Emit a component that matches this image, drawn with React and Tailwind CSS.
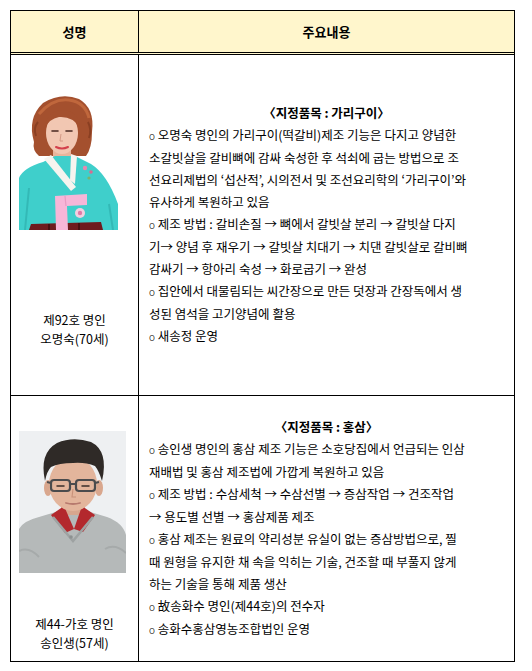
const font = { fontFamily: '"Noto Sans CJK KR", "Noto Sans", sans-serif' };

function WomanPhoto() {
  return (
    <svg width="99" height="138" viewBox="0 0 99 138">
      <rect width="99" height="138" fill="#ffffff" />
      {/* hair */}
      <path d="M15,50 Q8,26 24,11 Q42,0 60,7 Q76,16 73,40 Q73,56 67,64 L20,64 Q13,58 15,50 Z" fill="#a4502e" />
      <path d="M20,22 Q34,6 50,8 Q66,10 70,26" stroke="#c0673c" strokeWidth="3" fill="none" />
      <path d="M17,44 Q14,36 19,30 M69,30 Q73,38 70,46" stroke="#8a3f22" strokeWidth="2" fill="none" />
      {/* neck */}
      <rect x="34" y="54" width="18" height="16" fill="#e9b59c" />
      {/* face */}
      <ellipse cx="43" cy="41" rx="16" ry="21" fill="#f2c7b2" />
      <path d="M26,36 Q28,18 44,18 Q60,19 61,36 Q54,24 40,25 Q30,27 26,36 Z" fill="#a4502e" />
      <path d="M33,39 L39,39 M47,39 L53,39" stroke="#4a2a22" strokeWidth="1.6" strokeLinecap="round" />
      <path d="M42,42 L41,49 L44,49" stroke="#d49a86" strokeWidth="1" fill="none" />
      <path d="M37,55 Q43,58 49,55" stroke="#d3404c" strokeWidth="2" fill="none" strokeLinecap="round" />
      {/* hanbok body */}
      <path d="M0,138 L0,86 Q4,76 24,70 L36,64 L56,64 L72,72 Q88,82 99,112 L99,138 Z" fill="#3fcfcb" />
      <path d="M6,138 L10,96 M90,112 L94,138" stroke="#33b9b6" strokeWidth="2" fill="none" />
      {/* white collar */}
      <polygon points="25,67 32,63 57,95 52,99" fill="#f6f4ef" />
      <polygon points="52,62 58,64 56,92 51,88" fill="#f6f4ef" />
      {/* embroidery */}
      <circle cx="66" cy="76" r="2.2" fill="#e58ab0" />
      <circle cx="72" cy="80" r="1.8" fill="#d86c92" />
      <circle cx="70" cy="86" r="1.6" fill="#7cb36a" />
      {/* skirt */}
      <path d="M12,132 L82,130 L84,138 L10,138 Z" fill="#6e1b1e" />
      <path d="M30,132 L30,138 M60,131 L60,138" stroke="#3d0c0e" strokeWidth="1.5" />
      {/* ribbon */}
      <path d="M36,104 L68,102 L68,113 L48,114 L49,138 L37,138 Z" fill="#f7b6d8" />
      <path d="M46,104 L47,114" stroke="#e79bc2" strokeWidth="1.2" />
      <circle cx="61" cy="121" r="5" fill="#f3cfe0" />
      <circle cx="61" cy="121" r="2.2" fill="#e07aa6" />
    </svg>
  );
}

function ManPhoto() {
  return (
    <svg width="107" height="142" viewBox="0 0 107 142">
      <rect width="107" height="142" fill="#eef0f2" />
      {/* sweater */}
      <path d="M0,142 L0,98 Q4,90 20,86 L40,80 L68,80 L88,86 Q104,92 107,104 L107,142 Z" fill="#b5b9b9" />
      <path d="M0,120 Q10,115 20,126 M86,118 Q96,112 107,122" stroke="#a6aaaa" strokeWidth="2" fill="none" />
      {/* neck */}
      <rect x="42" y="68" width="24" height="16" fill="#d7a68e" />
      {/* red collar */}
      <polygon points="32,84 45,75 55,98 46,102" fill="#b3282d" />
      <polygon points="76,84 63,75 55,98 64,101" fill="#b3282d" />
      <path d="M34,86 L54,110 L74,86" stroke="#9ea2a2" strokeWidth="2.5" fill="none" />
      <circle cx="52" cy="106" r="1.8" fill="#8d9191" />
      {/* ears */}
      <ellipse cx="29" cy="57" rx="4" ry="8" fill="#d9a78e" />
      <ellipse cx="80" cy="57" rx="4" ry="8" fill="#d9a78e" />
      {/* face */}
      <ellipse cx="54" cy="53" rx="24" ry="27" fill="#e3b59c" />
      {/* hair */}
      <path d="M26,50 Q20,22 38,12 Q54,5 72,11 Q90,20 83,50 Q80,40 76,35 Q66,31 54,32 Q40,32 32,36 Q28,40 26,50 Z" fill="#2f2a27" />
      {/* glasses */}
      <rect x="32" y="49" width="19" height="11" rx="3" fill="none" stroke="#4b4b4d" strokeWidth="2.2" />
      <rect x="57" y="49" width="19" height="11" rx="3" fill="none" stroke="#4b4b4d" strokeWidth="2.2" />
      <path d="M51,53 L57,53 M32,52 L28,51 M76,52 L80,51" stroke="#4b4b4d" strokeWidth="2" />
      <path d="M38,55 L45,55 M63,55 L70,55" stroke="#3a2e2a" strokeWidth="1.5" strokeLinecap="round" />
      <path d="M54,58 L53,66 L57,66" stroke="#c8927a" strokeWidth="1.1" fill="none" />
      <path d="M47,72 Q54,74 61,72" stroke="#b77a6e" strokeWidth="1.8" fill="none" strokeLinecap="round" />
    </svg>
  );
}

const rows = [
  {
    photo: <WomanPhoto />,
    height: 'h-[341px]',
    pad: 'pt-[37px]',
    gap: 'mt-[80px]',
    caption: ['제92호 명인', '오명숙(70세)'],
    title: '〈지정품목 : 가리구이〉',
    lines: [
      'o 오명숙 명인의 가리구이(떡갈비)제조 기능은 다지고 양념한',
      '소갈빗살을 갈비뼈에 감싸 숙성한 후 석쇠에 굽는 방법으로 조',
      '선요리제법의 ‘섭산적’, 시의전서 및 조선요리학의 ‘가리구이’와',
      '유사하게 복원하고 있음',
      'o 제조 방법 : 갈비손질 → 뼈에서 갈빗살 분리 → 갈빗살 다지',
      '기→ 양념 후 재우기 → 갈빗살 치대기 → 치댄 갈빗살로 갈비뼈',
      '감싸기 → 항아리 숙성 → 화로굽기 → 완성',
      'o 집안에서 대물림되는 씨간장으로 만든 덧장과 간장독에서 생',
      '성된 염석을 고기양념에 활용',
      'o 새송정 운영',
    ],
  },
  {
    photo: <ManPhoto />,
    height: 'h-[265px]',
    pad: 'pt-[35px]',
    gap: 'mt-[41px]',
    caption: ['제44-가호 명인', '송인생(57세)'],
    title: '〈지정품목 : 홍삼〉',
    lines: [
      'o 송인생 명인의 홍삼 제조 기능은 소호당집에서 언급되는 인삼',
      '재배법 및 홍삼 제조법에 가깝게 복원하고 있음',
      'o 제조 방법 : 수삼세척 → 수삼선별 → 증삼작업 → 건조작업',
      '→ 용도별 선별 → 홍삼제품 제조',
      'o 홍삼 제조는 원료의 약리성분 유실이 없는 증삼방법으로, 찔',
      '때 원형을 유지한 채 속을 익히는 기술, 건조할 때 부풀지 않게',
      '하는 기술을 통해 제품 생산',
      'o 故송화수 명인(제44호)의 전수자',
      'o 송화수홍삼영농조합법인 운영',
    ],
  },
];

function Line({ text }) {
  if (text.startsWith('o ')) {
    return (
      <div className="whitespace-nowrap">
        <span className="text-[10px] font-light">o</span> {text.slice(2)}
      </div>
    );
  }
  return <div className="whitespace-nowrap">{text}</div>;
}

export default function App() {
  return (
    <div className="min-h-screen bg-white pt-[10px] pl-[10px] text-black" style={font}>
      <div className="w-[505px] border border-black">
        {/* header */}
        <div className="flex h-[44px] bg-[#fff6cc] border-b-[3px] border-double border-black text-[13px] font-bold">
          <div className="w-[128px] border-r border-black flex items-center justify-center">성명</div>
          <div className="flex-1 flex items-center justify-center">주요내용</div>
        </div>

        {rows.map((row, i) => (
          <div key={i} className={`flex ${row.height} ${i === 0 ? 'border-b border-black' : ''}`}>
            <div className={`w-[128px] shrink-0 border-r border-black flex flex-col ${row.pad}`}>
              <div className="pl-[8px]">{row.photo}</div>
              <div className={`${row.gap} text-center text-[12.5px] leading-[19px]`}>
                {row.caption.map((c) => (
                  <div key={c}>{c}</div>
                ))}
              </div>
            </div>
            <div className="flex-1 flex flex-col justify-center pl-[10px] text-[12.5px] leading-[22px]">
              <div className="text-center font-bold pr-[10px]">{row.title}</div>
              {row.lines.map((l) => (
                <Line key={l} text={l} />
              ))}
            </div>
          </div>
        ))}
      </div>
    </div>
  );
}
